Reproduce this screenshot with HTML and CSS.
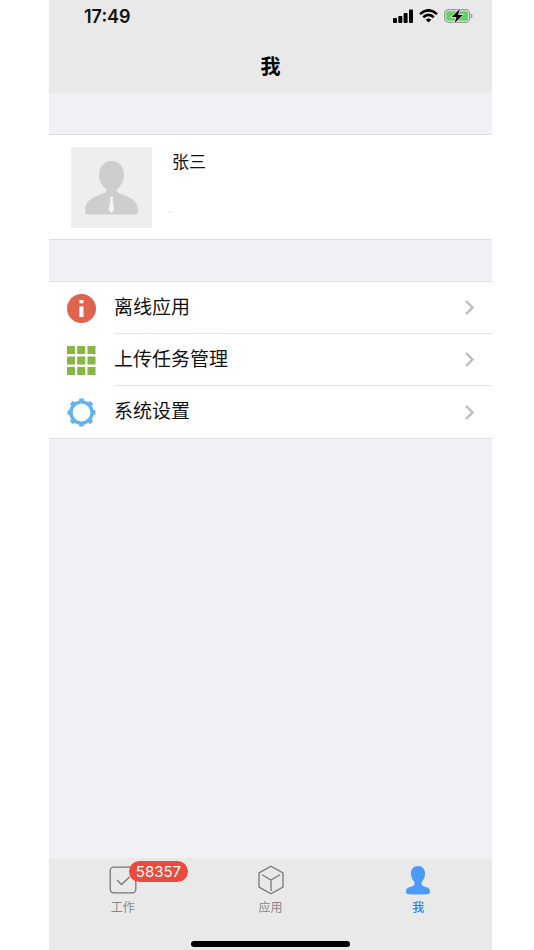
FILE: index.html
```html
<!DOCTYPE html>
<html lang="zh-CN">
<head>
    <meta charset="UTF-8">
    <meta name="viewport" content="width=device-width, initial-scale=1.0">
    <title>我</title>
    <link rel="stylesheet" href="styles.css">
</head>
<body>

<div class="phone">
    <header class="header">
        <div class="status-bar">
            <span class="time">17:49</span>
            <div class="status-icons">
                <svg width="20" height="14" viewBox="0 0 20 14">
                    <rect x="0" y="9" width="4" height="5" rx="1"/>
                    <rect x="5.3" y="7" width="4" height="7" rx="1"/>
                    <rect x="10.6" y="4" width="4" height="10" rx="1"/>
                    <rect x="16" y="0.5" width="4" height="13.5" rx="1"/>
                </svg>
                <svg width="19" height="14" viewBox="0 0 19 14" fill="none" stroke="#000" stroke-width="2.6">
                    <path d="M1 5.1Q9.5-2.5 18 5.1"/>
                    <path d="M4.2 8.3Q9.5 3.5 14.8 8.3"/>
                    <path d="M6.7 10.7Q9.5 8.4 12.3 10.7L9.5 13.6Z" fill="#000" stroke="none"/>
                </svg>
                <svg width="29" height="16" viewBox="0 0 29 16">
                    <rect x="0.7" y="1.7" width="25" height="12.6" rx="4" fill="none" stroke="#9a9a9a" stroke-width="1.3"/>
                    <rect x="2.2" y="3.2" width="22" height="9.6" rx="2.4" fill="#65cf67"/>
                    <path d="M27 5.7Q28.7 6.5 28.7 8T27 10.3Z" fill="#9a9a9a"/>
                    <path d="M16 0.8L7.8 9.1H12.5L10.6 15.3L18.8 6.9H14Z" stroke="#e9e9e9" stroke-width="1.4" paint-order="stroke"/>
                </svg>
            </div>
        </div>
        <h1 class="title">我</h1>
    </header>

    <main class="content">
        <section class="profile">
            <svg class="avatar" viewBox="0 0 81 81">
                <rect width="81" height="81" fill="#eee"/>
                <path d="M40.5 14C48 14 53 19.5 53 28C53 34 50.5 38.5 46 42C45 44.5 46 45.5 49 46.5C60 50.5 67 54 67 63C67 66 66.5 67.5 64.5 67.5H16.5C14.5 67.5 14 66 14 63C14 54 21 50.5 32 46.5C35 45.5 36 44.5 35 42C30.5 38.5 28 34 28 28C28 19.5 33 14 40.5 14Z" fill="#cecece"/>
                <path d="M38.8 49.5H42.2L41.7 52.5L43.3 63L40.5 66L37.5 63L39.5 52.5Z" fill="#f3f3f3"/>
            </svg>
            <div class="profile-info">
                <div class="name">张三</div>
                <div class="signature">.</div>
            </div>
        </section>

        <nav class="menu">
            <a class="menu-item" href="#offline">
                <svg class="menu-icon" viewBox="0 0 29 29">
                    <circle cx="14.5" cy="14.5" r="14.5" fill="#e0634d"/>
                    <path d="M12.4 6H16.5V9.2H12.4ZM12.4 12.5H16.5V23H12.4Z" fill="#fff"/>
                </svg>
                <span class="menu-label">离线应用
                    <svg class="arrow" viewBox="0 0 9 15"><path d="M1 1L7.5 7.5L1 14"/></svg>
                </span>
            </a>
            <a class="menu-item" href="#uploads">
                <svg class="menu-icon" viewBox="0 0 29 29" fill="#86b644">
                    <path d="M0 0H8V8H0ZM10.2 0H18.2V8H10.2ZM20.5 0H28.5V8H20.5Z"/>
                    <path d="M0 10.5H8V18.5H0ZM10.2 10.5H18.2V18.5H10.2ZM20.5 10.5H28.5V18.5H20.5Z"/>
                    <path d="M0 21H8V29H0ZM10.2 21H18.2V29H10.2ZM20.5 21H28.5V29H20.5Z"/>
                </svg>
                <span class="menu-label">上传任务管理
                    <svg class="arrow" viewBox="0 0 9 15"><path d="M1 1L7.5 7.5L1 14"/></svg>
                </span>
            </a>
            <a class="menu-item" href="#settings">
                <svg class="menu-icon" viewBox="0 0 29 29" stroke="#62b3ec" fill="none">
                    <circle cx="14.5" cy="14.5" r="10.6" stroke-width="3.4"/>
                    <path d="M14.5 0.5V4M14.5 25V28.5M0.5 14.5H4M25 14.5H28.5M4.4 4.4L7.2 7.2M21.8 21.8L24.6 24.6M4.4 24.6L7.2 21.8M21.8 7.2L24.6 4.4" stroke-width="4.6"/>
                </svg>
                <span class="menu-label">系统设置
                    <svg class="arrow" viewBox="0 0 9 15"><path d="M1 1L7.5 7.5L1 14"/></svg>
                </span>
            </a>
        </nav>
    </main>

    <footer class="footer">
        <nav class="tab-bar">
            <a class="tab" href="#work">
                <span class="tab-icon">
                    <svg width="28" height="30" viewBox="0 0 28 30">
                        <rect x="1.2" y="2.2" width="25.6" height="25.6" rx="3.5"/>
                        <path d="M8 15L12.5 19.5L20.5 12"/>
                    </svg>
                    <span class="badge">58357</span>
                </span>
                工作
            </a>
            <a class="tab" href="#apps">
                <span class="tab-icon">
                    <svg width="28" height="30" viewBox="0 0 28 30">
                        <path d="M14 1.2L26 8V22L14 28.8L2 22V8Z"/>
                        <path d="M5 9.7L14 15L23 9.7M14 15V26"/>
                    </svg>
                </span>
                应用
            </a>
            <a class="tab active" href="#me">
                <span class="tab-icon">
                    <svg width="28" height="30" viewBox="0 0 28 30">
                        <path d="M14 1C18.5 1 21 4 21 8.5C21 12.5 19.5 14.5 18 16.5C17 18 17 20 19 21C23 22.5 26 22.5 26 26.5C26 28.5 25.5 29 22 29.3C17 29.7 11 29.7 6 29.3C2.5 29 2 28.5 2 26.5C2 22.5 5 22.5 9 21C11 20 11 18 10 16.5C8.5 14.5 7 12.5 7 8.5C7 4 9.5 1 14 1Z"/>
                    </svg>
                </span>
                我
            </a>
        </nav>
        <div class="home-indicator"></div>
    </footer>
</div>

</body>
</html>
```
FILE: styles.css
```css
/* Page */
* {
    box-sizing: border-box;
}

body {
    margin: 0;
    padding: 0 42px 0 49px;
    background-color: #fff;
    font-family: Inter, "Noto Sans CJK SC", sans-serif;
    color: #111;
}

a {
    color: inherit;
    text-decoration: none;
}

svg {
    display: block;
    flex: none;
}

.phone {
    display: flex;
    flex-direction: column;
    min-height: 100vh;
    background-color: #f0f0f5;
}

/* Status bar and title */
.header {
    background-color: #e9e9e9;
}

.status-bar {
    display: flex;
    justify-content: space-between;
    align-items: center;
    height: 32px;
    padding: 0 19px 0 35px;
}

.time {
    font-size: 18px;
    font-weight: 600;
}

.status-icons {
    display: flex;
    align-items: center;
    gap: 6px;
}

.title {
    margin: 0;
    padding: 21px 0 12px;
    font-size: 20px;
    line-height: 28px;
    font-weight: bold;
    text-align: center;
    color: #000;
}

/* Profile card */
.content {
    flex: 1;
}

.profile {
    display: flex;
    gap: 20px;
    margin-top: 41px;
    padding: 12px 22px 11px;
    background-color: #fff;
    border-top: 1px solid #dedee2;
    border-bottom: 1px solid #dedee2;
}

.avatar {
    width: 81px;
    height: 81px;
}

.name {
    padding-top: 2px;
    font-size: 17px;
    line-height: 26px;
}

.signature {
    margin: 24px 0 0 -4px;
    font-size: 10px;
    line-height: 20px;
    color: #bbb;
}

/* Menu list */
.menu {
    margin-top: 41px;
    background-color: #fff;
    border-top: 1px solid #dedee2;
    border-bottom: 1px solid #dedee2;
}

.menu-item {
    display: flex;
    align-items: center;
    gap: 18px;
    padding-left: 18px;
}

.menu-icon {
    width: 29px;
    height: 29px;
}

.menu-label {
    display: flex;
    flex: 1;
    justify-content: space-between;
    align-items: center;
    height: 52px;
    padding-right: 18px;
    border-bottom: 1px solid #e4e4e6;
    font-size: 19px;
    line-height: 26px;
}

.menu-item:last-child .menu-label {
    border-bottom: none;
}

.arrow {
    width: 9px;
    height: 15px;
    fill: none;
    stroke: #bdbdbd;
    stroke-width: 2.4;
}

/* Bottom tabs */
.footer {
    padding-bottom: 3px;
    background-color: #e9e9e9;
}

.tab-bar {
    display: flex;
    height: 83px;
    padding-top: 7px;
}

.tab {
    display: flex;
    flex: 1;
    flex-direction: column;
    align-items: center;
    gap: 4px;
    font-size: 12px;
    line-height: 18px;
    color: #888;
}

.tab-icon {
    position: relative;
}

.tab-icon svg {
    fill: none;
    stroke: #777;
    stroke-width: 1.3;
}

.tab.active {
    font-weight: 500;
    color: #307fee;
}

.tab.active svg {
    fill: #4b9cf8;
    stroke: none;
}

.badge {
    position: absolute;
    top: -4px;
    left: 20px;
    padding: 0 7px;
    border-radius: 11px;
    background-color: #e94b3e;
    font-size: 15px;
    line-height: 21px;
    color: #fff;
}

.home-indicator {
    width: 36%;
    height: 6px;
    margin: 0 auto;
    border-radius: 3px;
    background-color: #000;
}
```
